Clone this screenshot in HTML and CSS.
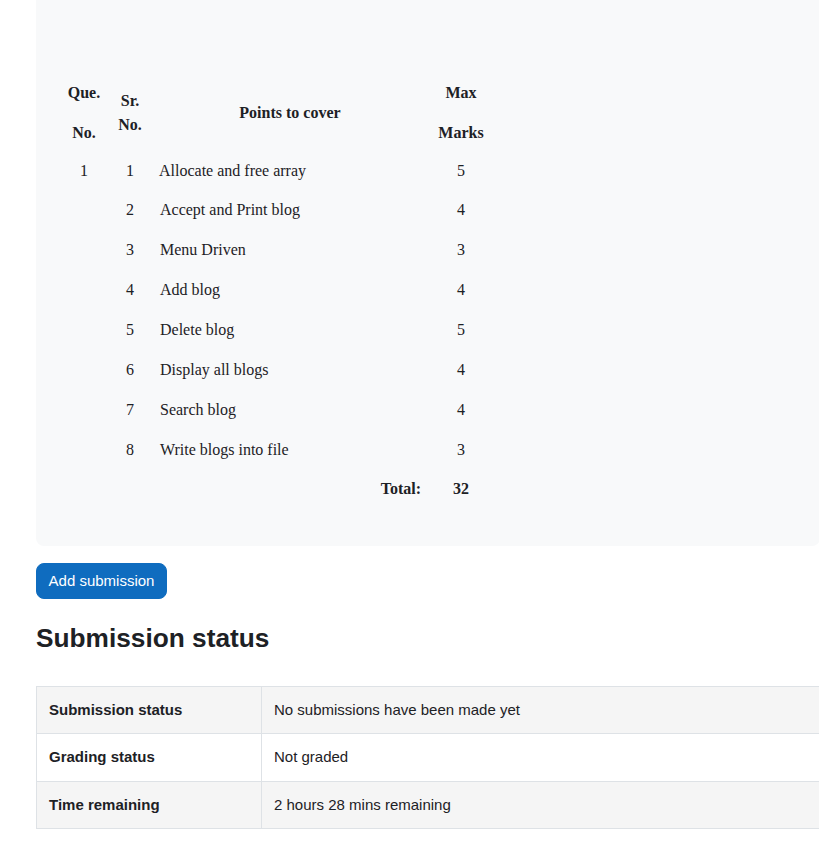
FILE: index.html
```html
<!DOCTYPE html>
<html>
<head>
<meta charset="utf-8">
<link rel="stylesheet" href="styles.css">
</head>
<body>
<div class="page">
  <div class="intro">
    <table class="marks">
      <colgroup>
        <col class="c-que"><col class="c-sr"><col class="c-pts"><col class="c-max">
      </colgroup>
      <thead>
        <tr>
          <th><p>Que.</p><p>No.</p></th>
          <th>Sr.<br>No.</th>
          <th>Points to cover</th>
          <th><p>Max</p><p>Marks</p></th>
        </tr>
      </thead>
      <tbody>
        <tr class="row1"><td>1</td><td>1</td><td class="pt first">Allocate and free array</td><td>5</td></tr>
        <tr><td></td><td>2</td><td class="pt">Accept and Print blog</td><td>4</td></tr>
        <tr><td></td><td>3</td><td class="pt">Menu Driven</td><td>3</td></tr>
        <tr><td></td><td>4</td><td class="pt">Add blog</td><td>4</td></tr>
        <tr><td></td><td>5</td><td class="pt">Delete blog</td><td>5</td></tr>
        <tr><td></td><td>6</td><td class="pt">Display all blogs</td><td>4</td></tr>
        <tr><td></td><td>7</td><td class="pt">Search blog</td><td>4</td></tr>
        <tr><td></td><td>8</td><td class="pt">Write blogs into file</td><td>3</td></tr>
        <tr class="total"><td></td><td></td><td class="tl">Total:</td><td>32</td></tr>
      </tbody>
    </table>
  </div>

  <button class="btn">Add submission</button>

  <h3 class="title">Submission status</h3>

  <table class="status">
    <tbody>
      <tr class="odd"><th>Submission status</th><td>No submissions have been made yet</td></tr>
      <tr><th>Grading status</th><td>Not graded</td></tr>
      <tr class="odd"><th>Time remaining</th><td>2 hours 28 mins remaining</td></tr>
    </tbody>
  </table>
</div>
</body>
</html>
```
FILE: styles.css
```css
html, body {
  margin: 0;
  padding: 0;
  background: #fff;
  overflow: hidden;
}
body {
  font-family: "Liberation Sans", Arial, sans-serif;
  color: #1d2125;
}
.page {
  padding-left: 36px;
  width: 820px;
}
.intro {
  width: 784px;
  background: #f8f9fa;
  border-radius: 0 0 8px 8px;
  padding: 73px 0 37px 22px;
  box-sizing: border-box;
}
.marks {
  border-collapse: collapse;
  font-family: "Liberation Serif", "Times New Roman", serif;
  font-size: 16px;
  line-height: 24px;
  color: #1d2125;
  table-layout: fixed;
  width: 434px;
}
.c-que { width: 52px; }
.c-sr { width: 40px; }
.c-pts { width: 280px; }
.c-max { width: 62px; }
.marks th {
  font-weight: bold;
  text-align: center;
  vertical-align: middle;
  padding: 8px 0 6px;
}
.marks th p {
  margin: 0;
}
.marks th p + p {
  margin-top: 16px;
}
.marks td {
  text-align: center;
  padding: 8px 0;
  vertical-align: middle;
}
.marks .row1 td {
  padding-bottom: 7px;
}
.marks td.pt {
  text-align: left;
  padding-left: 10px;
}
.marks td.pt.first {
  padding-left: 9px;
}
.marks .total td {
  font-weight: bold;
  padding-top: 7px;
}
.marks td.tl {
  text-align: right;
  padding-right: 9px;
}
.btn {
  display: block;
  margin-top: 17px;
  height: 36px;
  width: 131px;
  padding: 0;
  border: 1px solid #0f6cbf;
  border-radius: 8px;
  background: #0f6cbf;
  color: #fff;
  font-family: "Liberation Sans", Arial, sans-serif;
  font-size: 15px;
  line-height: 22px;
  text-align: center;
}
.title {
  margin: 24px 0 31px;
  font-size: 26.25px;
  line-height: 31.5px;
  font-weight: bold;
  color: #1d2125;
}
.status {
  border-collapse: collapse;
  width: 820px;
  font-size: 15px;
  line-height: 22.5px;
}
.status th, .status td {
  border: 1px solid #dee2e6;
  padding: 12px;
  text-align: left;
  vertical-align: top;
}
.status th {
  width: 200px;
  font-weight: bold;
}
.status tr.odd th, .status tr.odd td {
  background: #f5f5f5;
}
```
